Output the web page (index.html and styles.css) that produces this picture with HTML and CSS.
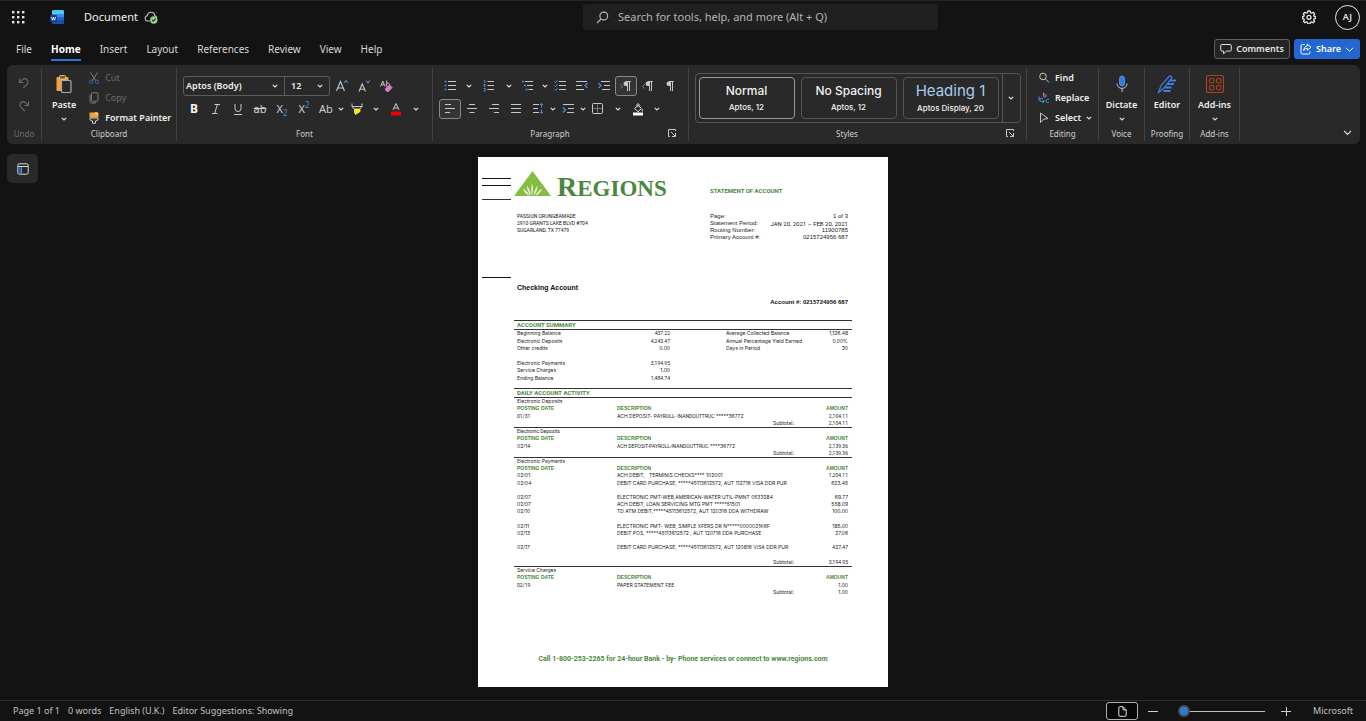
FILE: index.html
```html
<!DOCTYPE html>
<html lang="en">
<head>
<meta charset="utf-8">
<title>Document</title>
<link rel="stylesheet" href="styles.css">
</head>
<body>
<svg class="defs" aria-hidden="true">
  <symbol id="chev" viewBox="0 0 6 6"><path d="M.8 1.800 3 4l2.200-2.200" fill="none" stroke="#dedede" stroke-width="1.200"/></symbol>
  <symbol id="launch" viewBox="0 0 10 10"><path d="M3 8.500H1.500v-7h7V3M4 4l4.200 4.200M8.500 5v3.500H5" fill="none" stroke="#c8c8c8"/></symbol>
  <symbol id="pilcrow" viewBox="0 0 12 12"><path d="M6 1.500H4.800a2.300 2.300 0 0 0 0 4.600H6z" fill="#c8c8c8"/><path d="M6.500 11V1.500M8.500 11V1.500M4.800 1.500h5" fill="none" stroke="#c8c8c8"/></symbol>
</svg>

<header class="titlebar">
  <button class="plain waffle" aria-label="App launcher">
    <svg width="14" height="14" viewBox="0 0 14 14" fill="#e6e6e6"><rect x="1" y="1" width="2.400" height="2.400"/><rect x="6" y="1" width="2.400" height="2.400"/><rect x="11" y="1" width="2.400" height="2.400"/><rect x="1" y="6" width="2.400" height="2.400"/><rect x="6" y="6" width="2.400" height="2.400"/><rect x="11" y="6" width="2.400" height="2.400"/><rect x="1" y="11" width="2.400" height="2.400"/><rect x="6" y="11" width="2.400" height="2.400"/><rect x="11" y="11" width="2.400" height="2.400"/></svg>
  </button>
  <svg class="word-logo" width="14" height="16" viewBox="0 0 14 16" role="img" aria-label="Word"><rect x="2" y="1" width="12" height="14" rx="1.500" fill="#2563cf"/><path d="M2 5.500V2.500A1.500 1.500 0 0 1 3.500 1h9A1.500 1.500 0 0 1 14 2.500v3z" fill="#4cc9f5"/><path d="M2 5.500h12V8H2z" fill="#3a8fe8"/><path d="M2 11h12v2.500a1.500 1.500 0 0 1-1.500 1.500h-9A1.500 1.500 0 0 1 2 13.500z" fill="#174fb4"/><rect x="0" y="6" width="7" height="7" rx="1" fill="#123f96"/><path d="m1.500 8 1 3.200 1-3 1 3L5.600 8" fill="none" stroke="#fff" stroke-width=".9"/></svg>
  <span class="doc-name">Document</span>
  <svg class="cloud" width="14" height="13" viewBox="0 0 14 13" role="img" aria-label="Saved"><path d="M6 10H3.500a2.700 2.700 0 0 1-.3-5.300C3.600 2.500 5 1.200 7 1.200c2.200 0 3.600 1.500 3.800 3.500 1 .2 1.800.8 2.100 1.800" fill="none" stroke="#c4c4c4" stroke-width="1.100"/><circle cx="9.800" cy="9" r="3.700" fill="#9bd08a"/><path d="m8.200 9 1.200 1.200 2.200-2.500" fill="none" stroke="#1c3a18" stroke-width="1.100"/></svg>
  <label class="search">
    <svg width="13" height="13" viewBox="0 0 13 13" fill="none" stroke="#bdbdbd" stroke-width="1.100"><circle cx="7.800" cy="5" r="3.900"/><path d="M5 8 1 12"/></svg>
    <input type="search" aria-label="Search" placeholder="Search for tools, help, and more (Alt + Q)">
  </label>
  <button class="plain gear" aria-label="Settings">
    <svg width="14" height="14" viewBox="0 0 14 14" fill="none" stroke="#e6e6e6" stroke-width="1.300" stroke-linejoin="round"><path d="M5.900 1h2.200l.4 1.700 1.100.5 1.500-.9 1.500 1.500-.9 1.500.4 1 1.300.2v2l-1.300.3-.4 1 .9 1.500-1.500 1.500-1.500-.9-1.100.5-.4 1.600H5.900l-.4-1.600-1.100-.5-1.500.9-1.500-1.500.9-1.500-.4-1L.6 8.500v-2l1.300-.2.4-1-.9-1.500 1.500-1.500 1.500.9 1.100-.5z"/><circle cx="7" cy="7.300" r="2"/></svg>
  </button>
  <button class="avatar">AJ</button>
</header>

<nav class="tabs">
  <a href="#file">File</a><a href="#home" class="on">Home</a><a href="#insert">Insert</a><a href="#layout">Layout</a><a href="#references">References</a><a href="#review">Review</a><a href="#view">View</a><a href="#help">Help</a>
  <span class="grow"></span>
  <button class="comments"><svg width="12" height="12" viewBox="0 0 12 12" fill="none" stroke="#e0e0e0"><path d="M2 1.500h8a1.300 1.300 0 0 1 1.300 1.300v4A1.300 1.300 0 0 1 10 8.100H6.500L3.600 10.800V8.100H2A1.300 1.300 0 0 1 .7 6.800v-4A1.300 1.300 0 0 1 2 1.500z"/></svg>Comments</button>
  <button class="share"><svg width="12" height="12" viewBox="0 0 12 12" fill="none" stroke="#fff"><path d="M5 1.500H2.500A1.500 1.500 0 0 0 1 3v6.500A1.500 1.500 0 0 0 2.500 11h6A1.500 1.500 0 0 0 10 9.500V8.500M7.300 1.200l3.700 3-3.700 3V5.400C5.500 5.400 4.500 6 3.800 7.500 4 5 5 3.200 7.300 3z"/></svg>Share<svg width="9" height="9" viewBox="0 0 9 9" fill="none" stroke="#fff"><path d="m1 2.800 3.500 3.500L8 2.800"/></svg></button>
</nav>

<section class="ribbon" aria-label="Home ribbon">
  <div class="group undo">
    <div class="body stack">
      <button class="plain" aria-label="Undo"><svg width="12" height="12" viewBox="0 0 12 12" fill="none" stroke="#6c6c6c" stroke-width="1.100"><path d="M1.500 1.500V5.500H5.500M1.800 5.200 4.500 2.700A3.200 3.200 0 0 1 9 7.300L5.200 11"/></svg></button>
      <button class="plain" aria-label="Redo"><svg width="12" height="12" viewBox="0 0 12 12" fill="none" stroke="#6c6c6c" stroke-width="1.100"><path d="M10.500 1.500V5.500H6.500M10.200 5.200 7.500 2.700A3.200 3.200 0 0 0 3 7.300L6.800 11"/></svg></button>
    </div>
    <div class="caption dim">Undo</div>
  </div>

  <div class="group clip">
    <div class="body">
      <button class="big paste"><svg width="18" height="20" viewBox="0 0 18 20"><rect x="1.500" y="3" width="12" height="14" rx="1" fill="#f2a33a"/><rect x="4.500" y="1.500" width="6" height="3.500" rx="1" fill="#6b5a45" stroke="#e8d9b8" stroke-width=".8"/><rect x="6.500" y="6.500" width="9.500" height="12" rx="1" fill="#292929" stroke="#a8a8a8" stroke-width="1.200"/></svg>Paste<svg class="chev"><use href="#chev"/></svg></button>
      <div class="list">
        <button class="item off"><svg width="12" height="12" viewBox="0 0 12 12" fill="none" stroke="#7d7d7d"><path d="M2.500.5 8 9M9.500.5 4 9"/><g stroke="#37669c"><circle cx="3" cy="9.700" r="1.700"/><circle cx="9" cy="9.700" r="1.700"/></g></svg>Cut</button>
        <button class="item off"><svg width="12" height="12" viewBox="0 0 12 12" fill="none" stroke="#7d7d7d"><rect x="3.500" y=".8" width="6.500" height="8.500" rx="1"/><path d="M2 2.500v7A1.500 1.500 0 0 0 3.500 11H8"/></svg>Copy</button>
        <button class="item"><svg width="12" height="12" viewBox="0 0 12 12"><path d="M1.500.5h9v5h-9z" fill="#f2a33a"/><path d="M6 .5h3.500V3L8 2z" fill="#ffd98a"/><path d="M2 6h8v2L7.500 9v2.300h-3V9L2 8z" fill="#333" stroke="#d8d8d8" stroke-width=".9"/></svg>Format Painter</button>
      </div>
    </div>
    <div class="caption">Clipboard</div>
  </div>

  <div class="group font">
    <div class="body rows">
      <div class="row">
        <div class="combo"><span class="sel face"><select aria-label="Font"><option>Aptos (Body)</option></select><svg class="chev"><use href="#chev"/></svg></span><span class="sel size"><select aria-label="Font size"><option>12</option></select><svg class="chev"><use href="#chev"/></svg></span></div>
        <button class="ic" aria-label="Grow font"><svg width="14" height="14" viewBox="0 0 14 14" fill="none" stroke="#c8c8c8" stroke-width="1.100"><path d="M1.500 12 5.500 2.500l4 9.500M3 9h5"/><path d="m9 4 2-2.300L13 4" stroke="#4a90d9"/></svg></button>
        <button class="ic" aria-label="Shrink font"><svg width="14" height="14" viewBox="0 0 14 14" fill="none" stroke="#c8c8c8" stroke-width="1.100"><path d="M2 12.500 5.200 5l3.300 7.500M3.200 10.200h4"/><path d="m9 1.500 2 2.300 2-2.300" stroke="#4a90d9"/></svg></button>
        <button class="ic" aria-label="Clear formatting"><svg width="14" height="14" viewBox="0 0 14 14" fill="none" stroke="#c8c8c8"><path d="M1.500 7.500 3.800 2l2.300 5.500M2.300 5.700h3M7.700 1.500v6M7.700 5c.6-1.300 3-1 3 .8"/><path d="m6.500 9.500 4-3.500 2.500 2.500-3.500 4h-1.500L6.500 11z" fill="#d67ad2" stroke="#d67ad2"/></svg></button>
      </div>
      <div class="row">
        <button class="ic glyph"><b>B</b></button><button class="ic glyph" aria-label="Italic"><svg width="12" height="12" viewBox="0 0 12 12" fill="none" stroke="#c8c8c8"><path d="M4.500 1.500H10M2 10.500h5.500M7.400 1.500l-2.800 9"/></svg></button><button class="ic" aria-label="Underline"><svg width="12" height="12" viewBox="0 0 12 12" fill="none" stroke="#c8c8c8"><path d="M3 1v4.500a3 3 0 0 0 6 0V1M2 11.500h8"/></svg></button><button class="ic glyph strike">ab</button><button class="ic glyph"><span>X<sub>2</sub></span></button><button class="ic glyph"><span>X<sup>2</sup></span></button><button class="ic glyph">Ab</button>
        <button class="drop w8" aria-label="Change case options"><svg class="chev"><use href="#chev"/></svg></button>
        <button class="ic w24" aria-label="Highlight"><svg width="14" height="14" viewBox="0 0 14 14" fill="none" stroke="#c8c8c8"><path d="M2 1.500v3l2 2.500h6l2-2.500v-3M2 4.500h10M4.500 7v4.500"/><path d="M5 7.500h5v2L5.500 12.500z" fill="#ffe81a" stroke="#ffe81a"/></svg></button>
        <button class="drop w14" aria-label="Highlight colours"><svg class="chev"><use href="#chev"/></svg></button>
        <button class="ic w26" aria-label="Font colour"><svg width="12" height="14" viewBox="0 0 12 14" fill="none" stroke="#c8c8c8"><path d="M3 8 6 1.500 9 8M4 6h4"/><rect x="1" y="9.500" width="10" height="4" rx=".5" fill="#f40000" stroke="none"/></svg></button>
        <button class="drop w14" aria-label="Font colours"><svg class="chev"><use href="#chev"/></svg></button>
      </div>
    </div>
    <div class="caption">Font</div>
  </div>

  <div class="group para">
    <div class="body rows">
      <div class="row">
        <button class="ic" aria-label="Bullets"><svg width="12" height="12" viewBox="0 0 12 12"><path d="M4 1.500h8M4 5.500h8M4 9.500h8" stroke="#c8c8c8"/><path d="M.5 1.500h2M.5 5.500h2M.5 9.500h2" stroke="#4a90d9" stroke-width="1.500"/></svg></button>
        <button class="drop w15" aria-label="Bullet styles"><svg class="chev"><use href="#chev"/></svg></button>
        <button class="ic w26" aria-label="Numbering"><svg width="12" height="12" viewBox="0 0 12 12"><path d="M4.500 1.500H11M4.500 5.500H11M4.500 9.500H11" stroke="#c8c8c8"/><path d="M.8.5h1v2.500M.5 4.500h1.800L1 6.500h1.500M.5 8.500h1.800V11H.5" fill="none" stroke="#4a90d9"/></svg></button>
        <button class="drop w14" aria-label="Number styles"><svg class="chev"><use href="#chev"/></svg></button>
        <button class="ic w24" aria-label="Multilevel list"><svg width="12" height="12" viewBox="0 0 12 12"><path d="M3 1.500h8M5 5.500h6M6.500 9.500H11" stroke="#c8c8c8"/><path d="M0 1.500h2M2 5.500h2M3.500 9.500h2" stroke="#4a90d9" stroke-width="1.500"/></svg></button>
        <button class="drop w9" aria-label="List levels"><svg class="chev"><use href="#chev"/></svg></button>
        <button class="ic" aria-label="Checklist"><svg width="12" height="12" viewBox="0 0 12 12"><path d="M5 1.500h7M5 5.500h7M5 9.500h7" stroke="#c8c8c8"/><path d="m.5 1.500 1 1 2-2.200M.5 5.500l1 1 2-2.200M.5 9.500l1 1 2-2.200" fill="none" stroke="#4a90d9"/></svg></button>
        <button class="ic" aria-label="Decrease indent"><svg width="12" height="12" viewBox="0 0 12 12"><path d="M0 1.500h11M0 5.500h6M0 9.500h8" stroke="#c8c8c8"/><path d="M11.500 3 9 5.500 11.500 8" fill="none" stroke="#4a90d9" stroke-width="1.200"/></svg></button>
        <button class="ic" aria-label="Increase indent"><svg width="12" height="12" viewBox="0 0 12 12"><path d="M3 1.500h9M6 5.500h6M4 9.500h8" stroke="#c8c8c8"/><path d="M.5 3 3 5.500.5 8" fill="none" stroke="#4a90d9" stroke-width="1.200"/></svg></button>
        <button class="ic pressed" aria-label="Left-to-right"><svg width="12" height="12" viewBox="0 0 12 12"><use href="#pilcrow" x="1" width="12" height="12"/><path d="m.5 4.500 2 2-2 2" fill="none" stroke="#4a90d9"/></svg></button>
        <button class="ic" aria-label="Right-to-left"><svg width="12" height="12" viewBox="0 0 12 12"><use href="#pilcrow" x="1" width="12" height="12"/><path d="m2.500 4.500-2 2 2 2" fill="none" stroke="#4a90d9"/></svg></button>
        <button class="ic" aria-label="Show marks"><svg width="12" height="12"><use href="#pilcrow"/></svg></button>
      </div>
      <div class="row">
        <button class="ic pressed" aria-label="Align left"><svg width="12" height="12" viewBox="0 0 12 12" stroke="#c8c8c8"><path d="M1 1.500h6M1 5.500h10M1 9.500h5"/></svg></button>
        <button class="ic" aria-label="Centre"><svg width="12" height="12" viewBox="0 0 12 12" stroke="#c8c8c8"><path d="M3 1.500h6M1 5.500h10M3.500 9.500h5"/></svg></button>
        <button class="ic" aria-label="Align right"><svg width="12" height="12" viewBox="0 0 12 12" stroke="#c8c8c8"><path d="M4 1.500h7M1 5.500h10M6 9.500h5"/></svg></button>
        <button class="ic" aria-label="Justify"><svg width="12" height="12" viewBox="0 0 12 12" stroke="#c8c8c8"><path d="M1 1.500h10M1 5.500h10M1 9.500h10"/></svg></button>
        <button class="ic" aria-label="Line spacing"><svg width="12" height="12" viewBox="0 0 12 12" fill="none"><path d="M1 1.500h6M1 5.500h5M1 9.500h6" stroke="#c8c8c8"/><path d="M9.500.5v4M8 2.200l1.500-1.700L11 2.200M9.500 6.500v4M8 8.800l1.500 1.700L11 8.800" stroke="#4a90d9"/></svg></button>
        <button class="drop w8" aria-label="Line spacing options"><svg class="chev"><use href="#chev"/></svg></button>
        <button class="ic" aria-label="Special indent"><svg width="12" height="12" viewBox="0 0 12 12"><path d="M1 1.500h11M6 5.500h6M5 9.500h7" stroke="#c8c8c8"/><path d="m1 4.500 2.500 2.500L1 9.500" fill="none" stroke="#4a90d9" stroke-width="1.200"/></svg></button>
        <button class="drop w8" aria-label="Indent options"><svg class="chev"><use href="#chev"/></svg></button>
        <button class="ic" aria-label="Borders"><svg width="12" height="12" viewBox="0 0 12 12" fill="none"><rect x=".5" y=".5" width="10" height="10" rx="1" stroke="#c8c8c8"/><path d="M5.500 1.500v8M1.500 5.500h8" stroke="#777"/></svg></button>
        <button class="drop w17" aria-label="Border options"><svg class="chev"><use href="#chev"/></svg></button>
        <button class="ic w24" aria-label="Shading"><svg width="12" height="13" viewBox="0 0 12 13" fill="none" stroke="#d8d8d8"><path d="m2.500 5.500 3.500-3 3.500 3-3.500 3.200zM5 3.500V1.500c0-1 2-1 2 0v2"/><path d="M10.200 6v2.500"/><rect x="1" y="9.500" width="10" height="3" fill="#fff" stroke="none"/></svg></button>
        <button class="drop w14" aria-label="Shading colours"><svg class="chev"><use href="#chev"/></svg></button>
      </div>
    </div>
    <div class="caption more"><span>Paragraph</span><button class="plain" aria-label="Paragraph settings"><svg width="10" height="10"><use href="#launch"/></svg></button></div>
  </div>

  <div class="group styles">
    <div class="body">
      <div class="gallery">
        <button class="card on"><strong>Normal</strong><small>Aptos, 12</small></button>
        <button class="card"><strong>No Spacing</strong><small>Aptos, 12</small></button>
        <button class="card heading"><strong>Heading 1</strong><small>Aptos Display, 20</small></button>
        <button class="expand" aria-label="More styles"><svg class="chev"><use href="#chev"/></svg></button>
      </div>
    </div>
    <div class="caption more"><span>Styles</span><button class="plain" aria-label="Style settings"><svg width="10" height="10"><use href="#launch"/></svg></button></div>
  </div>

  <div class="group edit">
    <div class="body list">
      <button class="item"><svg width="12" height="12" viewBox="0 0 12 12" fill="none" stroke="#c8c8c8"><circle cx="5" cy="4.500" r="3.300"/><path d="m7.500 7 3.500 3.500"/></svg>Find</button>
      <button class="item"><svg width="12" height="12" viewBox="0 0 12 12" fill="none" stroke="#4a90d9"><path d="M5.500.5v4.300M5.500 3.200c.6-1 2.700-.8 2.700.6S6.100 5.500 5.500 4.500" stroke="#c77ad0"/><path d="M5 6.500H3.200a1.500 1.500 0 0 0 0 3H6M4.700 7.800l1.500 1.700-1.500 1.800M11 7.500c-1.500-.8-3 0-3 1.500s1.500 2.200 3 1.400M2 4.500C.8 5 .5 6.500 1 8"/></svg>Replace</button>
      <button class="item"><svg width="12" height="12" viewBox="0 0 12 12" fill="none" stroke="#c8c8c8"><path d="M2.500 1v9.500l3-3.200 4.500-.8z"/></svg>Select<svg class="chev"><use href="#chev"/></svg></button>
    </div>
    <div class="caption">Editing</div>
  </div>

  <div class="group voice">
    <div class="body"><button class="big"><svg width="18" height="20" viewBox="0 0 18 20" fill="none"><rect x="6.500" y="2" width="5" height="10" rx="2.500" fill="#2f7be0" stroke="#5a9cec" stroke-width=".8"/><path d="M4 9.500c0 6.500 10 6.500 10 0M9 14.500V18" stroke="#c8c8c8"/></svg>Dictate<svg class="chev"><use href="#chev"/></svg></button></div>
    <div class="caption">Voice</div>
  </div>
  <div class="group proof">
    <div class="body"><button class="big"><svg width="20" height="20" viewBox="0 0 20 20" fill="none"><path d="M1.500 18.500 4 11.500 12 2.500c1.500-1.500 3.500 0 2.300 1.800L7 14z" stroke="#3b82e0" stroke-width="1.200"/><path d="M13 6.500h6M10.500 10h6.500M8 13.500h6.500M6.500 17h7" stroke="#3b82e0" stroke-width="2"/></svg>Editor</button></div>
    <div class="caption">Proofing</div>
  </div>
  <div class="group addins">
    <div class="body"><button class="big"><svg width="20" height="20" viewBox="0 0 20 20" fill="none" stroke="#b2421f" stroke-width="1.100"><rect x="1.500" y="1.500" width="17" height="17" rx="2"/><rect x="4.500" y="4.500" width="4.500" height="4.500" rx="1.500"/><rect x="11.500" y="4.500" width="4.500" height="4.500" rx="1.500"/><rect x="4.500" y="11.500" width="4.500" height="4.500" rx="1.500"/><rect x="11.500" y="11.500" width="4.500" height="4.500" rx="1.500"/></svg>Add-ins<svg class="chev"><use href="#chev"/></svg></button></div>
    <div class="caption">Add-ins</div>
  </div>
  <button class="plain collapse" aria-label="Collapse ribbon"><svg width="9" height="9" viewBox="0 0 9 9" fill="none" stroke="#e0e0e0" stroke-width="1.200"><path d="m1 2.800 3.500 3.500L8 2.800"/></svg></button>
</section>

<main class="canvas">
  <button class="navpane" aria-label="Navigation"><svg width="12" height="12" viewBox="0 0 12 12" fill="none"><rect x=".8" y=".8" width="10.400" height="10.400" rx="1.500" stroke="#d8d8d8"/><path d="M1 3.500h10" stroke="#d8d8d8"/><path d="M4.500 4v7" stroke="#4a90d9"/><path d="M1.500 4.500h2.500v6H1.500z" fill="#2d66a8"/></svg></button>

  <article class="sheet">
    <div class="top">
      <svg width="29" height="109" viewBox="0 0 29 109" stroke="#111"><path d="M0 7.500h29M0 14.500h29M0 106.500h29"/><path d="M0 28.500h29" stroke="#333"/></svg>
      <div class="top-main">
        <div class="brand">
          <svg width="37" height="25" viewBox="0 0 37 25"><path d="M18.500 0 37 25H0z" fill="#86bc40"/><path d="M18 12.500c1.200 3 1.200 9 0 12-1-3-1-9 0-12zM13 14.500c2 2.500 3.600 7 4 10.200-2.500-2-4-6.500-4-10.200zM23.500 14.500c-2 2.500-3.600 7-4 10.200 2.500-2 4-6.500 4-10.200zM9 17.500c3 1.500 5.500 4.500 6.500 7.200-3-1-5.800-4-6.500-7.200zM28 17.500c-3 1.500-5.500 4.500-6.500 7.200 3-1 5.800-4 6.500-7.200z" fill="#e9f5d8"/></svg>
          <span class="wordmark">R<span>EGIONS</span></span>
        </div>
        <h1>STATEMENT OF ACCOUNT</h1>
        <address>PASSION ORUNGBAMADE<br>2910 GRANTS LAKE BLVD #704<br>SUGARLAND, TX 77479</address>
        <dl class="info">
          <dt>Page:</dt><dd>1 of 3</dd>
          <dt>Statement Period:</dt><dd class="n">JAN 20, 2021 – FEB 20, 2021</dd>
          <dt>Routing Number:</dt><dd>11900785</dd>
          <dt>Primary Account #:</dt><dd>0215724956 687</dd>
        </dl>
      </div>
    </div>
    <div class="ledger">
      <p class="kind">Checking Account</p>
      <p class="acct">Account #: 0215724956 687</p>

      <h2>ACCOUNT SUMMARY</h2>
      <table class="summary">
        <colgroup><col class="c-label"><col class="c-value"><col class="c-second"><col></colgroup>
        <tr><td>Beginning Balance</td><td class="n">437.22</td><td>Average Collected Balance</td><td>1,126.48</td></tr>
        <tr><td>Electronic Deposits</td><td class="n">4,243.47</td><td>Annual Percentage Yield Earned</td><td>0.00%</td></tr>
        <tr><td>Other credits</td><td>0.00</td><td>Days in Period</td><td>30</td></tr>
        <tr><td>&nbsp;</td><td></td><td></td><td></td></tr>
        <tr><td>Electronic Payments</td><td class="n">3,194.95</td><td></td><td></td></tr>
        <tr><td>Service Charges</td><td>1.00</td><td></td><td></td></tr>
        <tr><td>Ending Balance</td><td class="n">1,484.74</td><td></td><td></td></tr>
      </table>

      <h2>DAILY ACCOUNT ACTIVITY</h2>
      <table class="activity first">
        <colgroup><col class="c-date"><col class="c-desc"><col class="c-sub"><col></colgroup>
        <tr><td colspan="4">Electronic Deposits</td></tr>
        <tr><th>POSTING DATE</th><th colspan="2">DESCRIPTION</th><th>AMOUNT</th></tr>
        <tr><td class="n">01/31</td><td colspan="2">ACH DEPOSIT- <span class="n">PAYROLL- INANDOUTTRUC</span> *****36772</td><td class="n">2,104.11</td></tr>
        <tr><td></td><td></td><td>Subtotal:</td><td class="n">2,104.11</td></tr>
      </table>
      <table class="activity short ruled">
        <colgroup><col class="c-date"><col class="c-desc"><col class="c-sub"><col></colgroup>
        <tr><td colspan="4" class="n">Electronic Deposits</td></tr>
        <tr><th>POSTING DATE</th><th colspan="2">DESCRIPTION</th><th>AMOUNT</th></tr>
        <tr><td>02/14</td><td colspan="2"><span class="n">ACH DEPOSIT-PAYROLL-INANDOUTTRUC</span> ****36772</td><td class="n">2,139.36</td></tr>
        <tr><td></td><td></td><td>Subtotal:</td><td class="n">2,139.36</td></tr>
      </table>
      <table class="activity long ruled">
        <colgroup><col class="c-date"><col class="c-desc"><col class="c-sub"><col></colgroup>
        <tr><td colspan="4">Electronic Payments</td></tr>
        <tr><th>POSTING DATE</th><th colspan="2">DESCRIPTION</th><th>AMOUNT</th></tr>
        <tr><td>02/01</td><td colspan="2">ACH DEBIT, &nbsp; TERMINIS CHECKS**** 102001</td><td class="n">1,204.11</td></tr>
        <tr><td>02/04</td><td colspan="2">DEBIT CARD PURCHASE, *****45113612572, AUT 112716 VISA DDR PUR</td><td>623.45</td></tr>
        <tr><td colspan="4">&nbsp;</td></tr>
        <tr><td>02/07</td><td colspan="2">ELECTRONIC PMT-WEB,AMERICAN-WATER UTIL-PMNT 0533284</td><td>69.77</td></tr>
        <tr><td>02/07</td><td colspan="2">ACH DEBIT, LOAN SERVICING MTG PMT *****51501</td><td>558.09</td></tr>
        <tr><td>02/10</td><td colspan="2">TD ATM DEBIT,*****45113612572, AUT 120316 DDA WITHDRAW</td><td>100.00</td></tr>
        <tr><td colspan="4">&nbsp;</td></tr>
        <tr><td>02/11</td><td colspan="2">ELECTRONIC PMT- WEB, SIMPLE XFERS DR N*****0000021K6F</td><td>185.00</td></tr>
        <tr><td>02/13</td><td colspan="2">DEBIT POS, *****45113612572 , AUT 120716 DDA PURCHASE</td><td>27.06</td></tr>
        <tr><td colspan="4">&nbsp;</td></tr>
        <tr><td>02/17</td><td colspan="2">DEBIT CARD PURCHASE, *****45113612572, AUT 120816 VISA DDR PUR</td><td>427.47</td></tr>
        <tr><td colspan="4">&nbsp;</td></tr>
        <tr><td></td><td></td><td>Subtotal:</td><td class="n">3,194.95</td></tr>
      </table>
      <table class="activity short ruled">
        <colgroup><col class="c-date"><col class="c-desc"><col class="c-sub"><col></colgroup>
        <tr><td colspan="4">Service Charges</td></tr>
        <tr><th>POSTING DATE</th><th colspan="2">DESCRIPTION</th><th>AMOUNT</th></tr>
        <tr><td class="n">02/19</td><td colspan="2">PAPER STATEMENT FEE</td><td>1.00</td></tr>
        <tr><td></td><td></td><td>Subtotal:</td><td>1.00</td></tr>
      </table>
    </div>
    <p class="contact">Call 1-800-253-2265 for 24-hour Bank - by- Phone services or connect to www.regions.com</p>
  </article>
</main>

<footer class="status">
  <span>Page 1 of 1</span><span>0 words</span><span>English (U.K.)</span><span>Editor Suggestions: Showing</span>
  <span class="grow"></span>
  <button class="view" aria-label="Page view"><svg width="9" height="11" viewBox="0 0 9 11" fill="none" stroke="#e0e0e0"><path d="M2 .7h3L8.200 3.900V9A1.300 1.300 0 0 1 6.900 10.300H2A1.300 1.300 0 0 1 .8 9V2A1.300 1.300 0 0 1 2 .7zM5 .7v3.200h3.200"/></svg></button>
  <button class="plain zoom" aria-label="Zoom out"><svg width="10" height="10" stroke="#d0d0d0"><path d="M0 5.500h10"/></svg></button>
  <input type="range" aria-label="Zoom" min="0" max="100" value="0">
  <button class="plain zoom" aria-label="Zoom in"><svg width="10" height="10" stroke="#d0d0d0"><path d="M0 5.500h10M5.500 1v9"/></svg></button>
  <span class="vendor">Microsoft</span>
</footer>
</body>
</html>
```
FILE: styles.css
```css
* { box-sizing: border-box; }
body {
  margin: 0;
  min-height: 100vh;
  display: flex;
  flex-direction: column;
  background: #131313;
  border-top: 1px solid #242424;
  color: #e6e6e6;
  font: 11px/14px "Noto Sans", "Open Sans", sans-serif;
}
button, input, select { font: inherit; color: inherit; }
button { padding: 0; border: 0; background: none; display: flex; align-items: center; justify-content: center; white-space: nowrap; }
svg { flex: none; display: block; }
.defs { position: absolute; width: 0; height: 0; }
.grow { flex: 1; }
.chev { width: 6px; height: 6px; }

/* Title bar */
.titlebar { display: flex; align-items: center; height: 32px; padding: 0 6px 0 11px; }
.word-logo { margin-left: 25px; }
.doc-name { margin-left: 20px; color: #f0f0f0; width: 60px; }
.search { display: flex; align-items: center; gap: 9px; width: 355px; height: 26px; margin-left: 425px; padding: 0 13px; background: #202020; border-radius: 3px; }
.search input { flex: 1; min-width: 0; padding: 0; border: 0; outline: 0; background: none; }
.search input::placeholder { color: #b4b4b4; opacity: 1; }
.gear { margin-left: auto; }
.avatar { width: 25px; height: 25px; margin-left: 19px; border: 1px solid #e8e8e8; border-radius: 50%; font-size: 9px; font-weight: 600; }

/* Tabs */
.tabs { display: flex; align-items: center; gap: 19px; height: 32px; padding: 0 6px 0 16px; font-size: 10px; }
.tabs a { color: #d8d8d8; text-decoration: none; padding: 4px 0 3px; border-bottom: 2px solid transparent; }
.tabs a.on { color: #fff; font-weight: 700; border-color: #2e74d6; }
.comments, .share { height: 20px; border-radius: 3px; font-size: 9px; font-weight: 600; gap: 4px; }
.comments { width: 76px; border: 1px solid #606060; background: #242424; }
.share { width: 66px; margin-left: -15px; background: #2466d1; color: #fff; }

/* Ribbon */
.ribbon { display: flex; margin: 0 6px 0 7px; height: 79px; padding: 3px 0; background: #292929; border-radius: 6px; }
.group { display: flex; flex-direction: column; border-right: 1px solid #424242; }
.group .body { flex: 1; display: flex; justify-content: center; }
.caption { height: 13px; font-size: 8px; line-height: 12px; text-align: center; color: #d0d0d0; }
.caption.dim { color: #6c6c6c; }
.caption.more { display: grid; grid-template-columns: 1fr 10px; padding-right: 11px; }
.caption.more button { height: 10px; }
.undo { width: 35px; }
.clip { width: 135px; }
.font, .para { width: 256px; }
.styles { width: 338px; }
.edit { width: 72px; }
.voice { width: 46px; }
.proof { width: 45px; }
.addins { width: 50px; }
.body.stack { flex-direction: column; align-items: center; justify-content: flex-start; gap: 11px; padding-top: 9px; }
.clip .body { justify-content: flex-start; padding-left: 10px; }
.list { display: flex; flex-direction: column; }
.clip .list { margin-left: 12px; }
.group .body.list { justify-content: flex-start; padding-left: 11px; }
.item { height: 20px; gap: 5px; justify-content: flex-start; font-size: 9px; font-weight: 600; color: #f0f0f0; }
.item.off { color: #6c6c6c; font-weight: 400; }
.big { flex-direction: column; justify-content: flex-start; font-size: 9px; line-height: 12px; font-weight: 600; padding-top: 6px; gap: 5px; color: #f0f0f0; }
.body.rows { flex-direction: column; justify-content: flex-start; gap: 3px; padding: 8px 0 0 6px; }
.row { display: flex; height: 20px; }
.combo { display: flex; width: 147px; margin-right: 1px; border: 1px solid #5c5c5c; border-radius: 3px; }
.sel { display: flex; align-items: center; padding-right: 6px; font-size: 9px; font-weight: 600; }
.sel select { flex: 1; min-width: 0; appearance: none; border: 0; outline: 0; background: none; padding: 0 2px; color: #f0f0f0; }
.face { flex: 1; }
.size { width: 45px; padding-left: 4px; border-left: 1px solid #5c5c5c; }
.ic { width: 22px; height: 20px; border-radius: 3px; }
.pressed { border: 1px solid #8a8a8a; background: #343434; }
.glyph { font-size: 11px; color: #d0d0d0; }
.glyph b { font-size: 12px; color: #f4f4f4; }
.glyph sub, .glyph sup { font-size: 8px; line-height: 0; color: #4a90d9; }
.strike { text-decoration: line-through; }
.drop { height: 20px; }
.w8 { width: 8px; }
.w9 { width: 9px; }
.w14 { width: 14px; }
.w15 { width: 15px; }
.w17 { width: 17px; }
.w24 { width: 24px; }
.w26 { width: 26px; }
.gallery { display: flex; gap: 6px; align-self: flex-start; margin-top: 5px; height: 50px; padding: 3px 0 3px 3px; border: 1px solid #555; border-radius: 4px; }
.card { width: 96px; flex-direction: column; gap: 2px; border: 1px solid #555; border-radius: 4px; color: #f0f0f0; }
.card.on { border-color: #9a9a9a; }
.card strong { font-size: 12px; line-height: 16px; font-weight: 500; font-family: Inter, sans-serif; }
.card small { font-size: 8px; line-height: 12px; font-weight: 500; font-family: Inter, sans-serif; }
.card.heading strong { font-size: 15px; line-height: 18px; font-weight: 400; color: #a9cdee; }
.expand { width: 18px; margin: -3px 0 -3px -3px; border-left: 1px solid #555; }
.collapse { margin: auto 8px 4px auto; }

/* Canvas */
.canvas { flex: 1; display: flex; justify-content: center; padding: 13px 0; position: relative; }
.navpane { position: absolute; left: 7px; top: 10px; width: 31px; height: 29px; background: #292929; border-radius: 5px; }
.sheet { width: 410px; min-height: 530px; padding: 14px 36px 24px 4px; background: #fff; color: #222; font: 6px/7px "Liberation Sans", Arial, sans-serif; display: flex; flex-direction: column; }
.top { display: grid; grid-template-columns: 29px 1fr; column-gap: 3px; }
.top-main { display: grid; grid-template-columns: 196px 1fr; grid-template-rows: 26px 1fr; row-gap: 16px; }
.brand { display: flex; gap: 6px; }
.wordmark { font: bold 28px/32px "Liberation Serif", serif; color: #4c8740; }
.wordmark span { font-size: 23px; }
h1, h2, p, dl, dd { margin: 0; font: inherit; }
.sheet h1 { align-self: end; padding-bottom: 3px; font: bold 6px/7px Roboto, sans-serif; color: #4c8740; }
address { padding-left: 3px; font: 5px/7px Roboto, sans-serif; color: #111; }
.info { display: grid; grid-template-columns: auto auto; align-content: start; padding-right: 4px; }
.info dd { text-align: right; }
.n { font-family: Roboto, sans-serif; }
.ledger { margin-left: 32px; }
.kind { margin-top: 4px; padding-left: 3px; font-size: 7px; line-height: 8px; font-weight: 700; color: #111; }
.acct { margin: 6px 4px 14px 0; line-height: 8px; font-weight: 700; text-align: right; color: #111; }
.sheet h2 { height: 10px; padding-left: 3px; border: solid #333; border-width: 1px 0; font: bold 6px/8px Roboto, sans-serif; color: #4c8740; }
.sheet table { width: 100%; border-spacing: 0; table-layout: fixed; font: 5px/7px Inter, sans-serif; }
.sheet td, .sheet th { padding: 0; white-space: nowrap; text-align: left; }
.sheet td:first-child, .sheet th:first-child { padding-left: 3px; }
.sheet td:last-child, .sheet th:last-child { padding-right: 4px; text-align: right; }
.sheet td[colspan="4"] { text-align: left; }
.sheet th { color: #4c8740; font-family: "Liberation Sans", sans-serif; }
.c-label { width: 112px; }
.c-value { width: 44px; }
.c-second { width: 140px; }
.c-date { width: 103px; }
.c-desc { width: 156px; }
.c-sub { width: 36px; }
.summary { height: 52px; margin-bottom: 6px; }
.summary td:nth-child(2) { text-align: right; }
.summary td:nth-child(3) { padding-left: 56px; }
.first { height: 29px; }
.short { height: 30px; }
.long { height: 109px; }
.ruled { border-top: 1px solid #333; }
.contact { margin-top: auto; text-align: center; padding-left: 32px; font: bold 7px/8px Roboto, sans-serif; color: #4c8740; }

/* Status bar */
.status { display: flex; align-items: center; gap: 8px; height: 21px; padding: 0 13px; border-top: 1px solid #2c2c2c; font-size: 9px; color: #c0c0c0; }
.view { width: 32px; height: 18px; border: 1px solid #b0b0b0; border-radius: 3px; background: #080808; }
.zoom { width: 14px; height: 18px; }
.status input { appearance: none; width: 87px; height: 12px; margin: 0 6px 0 10px; background: linear-gradient(#bdbdbd, #bdbdbd) center / 100% 1px no-repeat; }
.status input::-webkit-slider-thumb { appearance: none; width: 12px; height: 12px; border: 2px solid #4d4d4d; border-radius: 50%; background: #2f7be0; }
.vendor { margin-left: 12px; }
```
